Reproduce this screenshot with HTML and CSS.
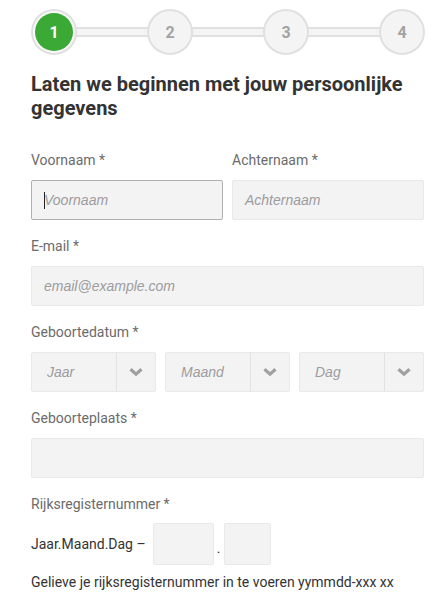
FILE: index.html
```html
<!DOCTYPE html>
<html lang="nl">
<head>
<meta charset="utf-8">
<link rel="stylesheet" href="styles.css">
</head>
<body>
<div class="page">
  <div class="stepper">
    <div class="step active"><span class="dot">1</span></div>
    <div class="bar"></div>
    <div class="step"><span class="dot">2</span></div>
    <div class="bar"></div>
    <div class="step"><span class="dot">3</span></div>
    <div class="bar"></div>
    <div class="step"><span class="dot">4</span></div>
  </div>

  <h1 class="title">Laten we beginnen met jouw persoonlijke gegevens</h1>

  <div class="row two">
    <div class="field">
      <label class="label">Voornaam *</label>
      <div class="input focus"><span class="caret"></span><span class="ph">Voornaam</span></div>
    </div>
    <div class="field">
      <label class="label">Achternaam *</label>
      <div class="input"><span class="ph">Achternaam</span></div>
    </div>
  </div>

  <div class="field">
    <label class="label">E-mail *</label>
    <div class="input"><span class="ph">email@example.com</span></div>
  </div>

  <div class="field">
    <label class="label">Geboortedatum *</label>
    <div class="selects">
      <div class="select"><span class="ph sel">Jaar</span><span class="arrow"><svg width="14" height="10" viewBox="0 0 14 10"><path d="M1.5 2.2 L7 7.2 L12.5 2.2" fill="none" stroke="#a0a0a0" stroke-width="3.2" stroke-linejoin="miter"/></svg></span></div>
      <div class="select"><span class="ph sel">Maand</span><span class="arrow"><svg width="14" height="10" viewBox="0 0 14 10"><path d="M1.5 2.2 L7 7.2 L12.5 2.2" fill="none" stroke="#a0a0a0" stroke-width="3.2" stroke-linejoin="miter"/></svg></span></div>
      <div class="select"><span class="ph sel">Dag</span><span class="arrow"><svg width="14" height="10" viewBox="0 0 14 10"><path d="M1.5 2.2 L7 7.2 L12.5 2.2" fill="none" stroke="#a0a0a0" stroke-width="3.2" stroke-linejoin="miter"/></svg></span></div>
    </div>
  </div>

  <div class="field">
    <label class="label">Geboorteplaats *</label>
    <div class="input"></div>
  </div>

  <div class="field last">
    <label class="label">Rijksregisternummer *</label>
    <div class="rrn">
      <span class="rrn-text">Jaar.Maand.Dag –</span>
      <div class="box wide"></div>
      <span class="sep">.</span>
      <div class="box narrow"></div>
    </div>
    <p class="help">Gelieve je rijksregisternummer in te voeren yymmdd-xxx xx</p>
  </div>
</div>
</body>
</html>
```

FILE: styles.css
```css
* { box-sizing: border-box; }
html, body { margin: 0; padding: 0; background: #fff; }
body {
  font-family: Roboto, "Liberation Sans", Arial, sans-serif;
  color: #333;
  width: 440px;
  height: 605px;
  overflow: hidden;
}
.page {
  padding: 9px 16px 0 31px;
}
.stepper {
  display: flex;
  align-items: center;
  width: 394px;
  height: 46px;
}
.step {
  width: 46px;
  height: 46px;
  flex: none;
  border-radius: 50%;
  border: 2px solid #e0e0e0;
  background: #f4f4f4;
  padding: 2px;
  display: flex;
  position: relative;
  z-index: 1;
}
.dot {
  flex: 1;
  border-radius: 50%;
  display: flex;
  align-items: center;
  justify-content: center;
  font-size: 16px;
  font-weight: 700;
  color: #a3a3a3;
}
.step.active { background: #fafafa; }
.step.active .dot { background: #3aa935; color: #fff; }
.bar {
  flex: 1;
  height: 10px;
  margin: 0 -2px;
  background: #f4f4f4;
  border-top: 2px solid #e0e0e0;
  border-bottom: 2px solid #e0e0e0;
}
.title {
  margin: 17px 0 30px;
  font-size: 20px;
  line-height: 24px;
  font-weight: 700;
  color: #333;
  width: 393px;
}
.field { margin-bottom: 16px; width: 393px; }
.row.two { display: flex; gap: 9px; width: 393px; }
.row.two .field { flex: 1; width: auto; }
.label {
  display: block;
  font-size: 14px;
  line-height: 20px;
  color: #6b6b6b;
  margin-bottom: 10px;
}
.input {
  height: 40px;
  background: #f3f3f3;
  border: 1px solid #e9e9e9;
  border-radius: 2px;
  display: flex;
  align-items: center;
  padding-left: 12px;
}
.input.focus { border-color: #b0b0b0; }
.caret {
  width: 1px;
  height: 17px;
  background: #222;
  margin-right: -1px;
}
.ph {
  font-family: "Liberation Sans", Arial, sans-serif;
  font-style: italic;
  font-size: 14px;
  color: #9c9ca0;
}
.selects { display: flex; gap: 9px; }
.select {
  flex: 1;
  height: 40px;
  background: #f3f3f3;
  border: 1px solid #e9e9e9;
  border-radius: 2px;
  display: flex;
  align-items: center;
}
.ph.sel { flex: 1; padding-left: 15px; }
.arrow {
  width: 39px;
  height: 100%;
  border-left: 1px solid #e2e2e2;
  display: flex;
  align-items: center;
  justify-content: center;
}
.arrow svg { display: block; }
.rrn {
  display: flex;
  align-items: center;
  margin-top: -1px;
}
.rrn-text {
  font-size: 14px;
  color: #333;
  margin-right: 7px;
}
.box {
  height: 42px;
  background: #f3f3f3;
  border: 1px solid #e9e9e9;
  border-radius: 2px;
}
.box.wide { width: 61px; }
.box.narrow { width: 47px; }
.sep {
  width: 10px;
  text-align: center;
  font-size: 14px;
  color: #333;
  align-self: flex-end;
  margin-bottom: 9px;
}
.help {
  margin: 7px 0 0;
  font-size: 14px;
  line-height: 20px;
  color: #333;
}
```
